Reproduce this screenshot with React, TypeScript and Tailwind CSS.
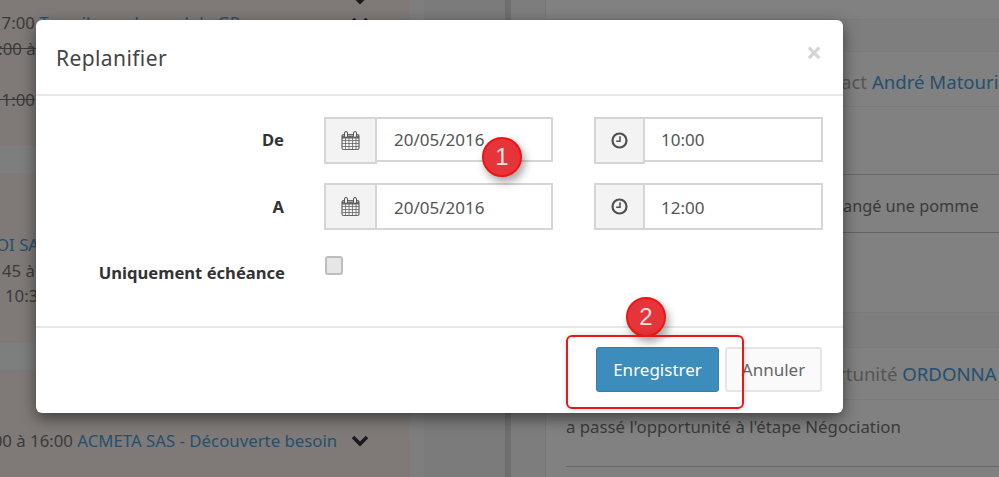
const font = { fontFamily: '"Noto Sans", sans-serif' };

function CalendarIcon() {
  return (
    <svg width="19" height="20" viewBox="0 0 19 20" fill="none" stroke="#666" strokeWidth="1">
      <rect x="1" y="3.5" width="17" height="15" rx="1.5" fill="#f3f3f3" strokeWidth="1.2" />
      <path d="M1 9.5h17M1 12.5h17M1 15.5h17M4.5 7v11.5M8 7v11.5M11.5 7v11.5M15 7v11.5" strokeWidth="0.8" />
      <path d="M1 4.5h17v3h-17z" fill="#666" stroke="none" />
      <rect x="3.5" y="0.5" width="3" height="6" rx="1.5" fill="#f3f3f3" stroke="#555" />
      <rect x="12.5" y="0.5" width="3" height="6" rx="1.5" fill="#f3f3f3" stroke="#555" />
    </svg>
  );
}

function ClockIcon() {
  return (
    <svg width="17" height="17" viewBox="0 0 17 17" fill="none" stroke="#4f4f4f" strokeWidth="2.2">
      <circle cx="8.5" cy="8.5" r="7" />
      <path d="M9 4.2v5H5.2" strokeWidth="1.5" />
    </svg>
  );
}

function Chevron({ className = '' }: { className?: string }) {
  return (
    <svg className={className} width="18" height="12" viewBox="0 0 18 12" fill="none" stroke="#1a1a1a" strokeWidth="3.5">
      <path d="M2 2l7 7 7-7" />
    </svg>
  );
}

function InputGroup({ icon, value, addonWidth, inputClass }: { icon: React.ReactNode; value: string; addonWidth: string; inputClass: string }) {
  return (
    <div className="flex items-start">
      <div className={`flex h-[47px] items-center justify-center border-2 border-[#d5d5d5] bg-[#f3f3f3] ${addonWidth}`}>{icon}</div>
      <div className={`-ml-0.5 flex items-center border-2 border-[#d5d5d5] bg-white text-[17px] text-[#555] ${inputClass}`}>{value}</div>
    </div>
  );
}

function FormRow({ label, date, time, tall }: { label: string; date: string; time: string; tall?: boolean }) {
  return (
    <div className="flex h-[47px] items-start">
      <div className={`w-[248px] text-right text-[16.6px] font-bold text-[#333] ${tall ? 'pt-[12px]' : 'pt-[11px]'}`}>{label}</div>
      <div className="ml-10">
        <InputGroup icon={<CalendarIcon />} value={date} addonWidth="w-[53px]" inputClass={tall ? 'h-[47px] w-[178px] pl-[17px] pt-[2px]' : 'h-[45px] w-[178px] pl-[17px]'} />
      </div>
      <div className="ml-[41px]">
        <InputGroup icon={<ClockIcon />} value={time} addonWidth="w-[51px]" inputClass={tall ? 'h-[47px] w-[180px] pl-4 pt-[2px]' : 'h-[45px] w-[180px] pl-4'} />
      </div>
    </div>
  );
}

function Badge({ n, className }: { n: number; className: string }) {
  return (
    <div className={`absolute flex h-[40px] w-[40px] items-center justify-center rounded-full border-2 border-[#f01414] bg-[#e5343a] text-[24px] font-medium text-[#fbe3e3] shadow-[3px_5px_8px_rgba(0,0,0,0.35)] ${className}`} style={{ fontFamily: '"Liberation Sans", sans-serif' }}>
      {n}
    </div>
  );
}

export default function App() {
  return (
    <div className="relative h-[477px] w-[999px] overflow-hidden bg-[#808080] text-[16.8px] text-[#3a3a3a]" style={font}>
      {/* page behind the modal */}
      <div className="flex h-full">
        <div className="h-full w-[410px] shrink-0 overflow-hidden whitespace-nowrap bg-[#7f7a78]">
          <div className="flex h-[10px] w-[369px] justify-end">
            <Chevron className="-mt-[7px]" />
          </div>
          <div className="flex h-[26px] w-[369px] items-center justify-between">
            <span>
              <span className="-ml-2 inline-block">17:00</span> <span className="text-[#24506e]">Travail avec le module GP</span>
            </span>
            <Chevron />
          </div>
          <div className="-ml-[21px] flex h-[26px] items-center line-through">10:00 à 11:00</div>
          <div className="h-[25px]" />
          <div className="-ml-2 flex h-[26px] items-center line-through">11:00</div>
          <div className="h-[33px]" />
          <div className="h-[27px] bg-[#7d7f7f]" />
          <div className="h-[59px]" />
          <div className="-ml-[4px] flex h-[26px] items-center text-[#24506e]">OI SAS</div>
          <div className="flex h-[26px] items-center pl-[2px]">45 à</div>
          <div className="flex h-[24px] items-center pl-[5px]">10:3</div>
          <div className="h-[35px]" />
          <div className="h-[27px] bg-[#7d7f7f]" />
          <div className="h-[58px]" />
          <div className="-ml-[31px] flex h-[26px] items-center">
            <span>10:00 à 16:00&nbsp;</span>
            <span className="text-[#24506e]">ACMETA SAS - Découverte besoin</span>
            <Chevron className="ml-[14px]" />
          </div>
        </div>
        <div className="h-full w-[14px] shrink-0 bg-[#7d7e7d]" />
        <div className="h-full w-[81px] shrink-0 bg-[#7b7b7b]" />
        <div className="h-full w-[6px] shrink-0 bg-[#6f6f6f]" />
        <div className="h-full w-[34px] shrink-0 bg-[#7d7d7d]" />
        <div className="h-full min-w-0 flex-1 overflow-hidden whitespace-nowrap border-l border-[#787878] bg-[#818181]">
          <div className="h-[20px] border-b border-[#7a7a7a]" />
          <div className="h-[32px] border-b border-[#7a7a7a] bg-[#7e7e7e]" />
          <div className="flex h-[55px] items-center border-b border-[#7a7a7a] pl-[295px] pt-[5px] text-[18.6px]">
            <span className="text-[#555]">act&nbsp;</span>
            <span className="text-[#24506e]">André Matouri</span>
          </div>
          <div className="ml-5 h-[68px] border-b border-[#6a6a6a]" />
          <div className="ml-5 flex h-[58px] items-center border-b border-[#636363] pl-[277px] pt-[5px] text-[16.3px]">angé une pomme</div>
          <div className="h-[80px] border-b border-[#7a7a7a]" />
          <div className="h-[34px] bg-[#7e7e7e]" />
          <div className="flex h-[53px] items-center border-y border-[#7a7a7a] pl-[292px] text-[18.6px]">
            <span className="text-[#555]">rtunité&nbsp;</span>
            <span className="text-[#24506e]">ORDONNA</span>
          </div>
          <div className="ml-5 flex h-[67px] items-start border-b border-[#666] pt-[15px] leading-6">a passé l'opportunité à l'étape Négociation</div>
        </div>
      </div>

      {/* modal */}
      <div className="absolute left-9 top-5 w-[807px] rounded-md bg-white shadow-[0_5px_15px_rgba(0,0,0,0.5)]">
        <div className="flex h-[76px] items-center justify-between border-b-2 border-[#e8e8e8] pl-5 pr-[21px] pt-[4px]">
          <h4 className="text-[21px] tracking-[0.4px] text-[#444]">Replanifier</h4>
          <span className="-mt-[14px] text-[28px] font-bold leading-none text-[#d4d4d4]">×</span>
        </div>
        <div className="h-[230px] pt-[21px]">
          <FormRow label="De" date="20/05/2016" time="10:00" />
          <div className="h-[19px]" />
          <FormRow label="A" date="20/05/2016" time="12:00" tall />
          <div className="mt-[26px] flex items-start">
            <div className="w-[249px] pt-[5px] text-right text-[16.6px] font-bold text-[#333]">Uniquement échéance</div>
            <div className="ml-10 h-[19px] w-[18px] rounded-[3px] border-2 border-[#bdbdbd] bg-[#e6e6e6]" />
          </div>
        </div>
        <div className="flex h-[87px] items-start justify-end gap-[6px] border-t-2 border-[#e8e8e8] pr-[21px] pt-[19px]">
          <button className="h-[45px] w-[123px] rounded-[3px] border border-[#367fa9] bg-[#3c8dbc] text-[17px] text-white">Enregistrer</button>
          <button className="h-[45px] w-[97px] rounded-[3px] border-2 border-[#e6e6e6] bg-[#fafafa] text-[17px] text-[#666]">Annuler</button>
        </div>
      </div>

      {/* annotations */}
      <Badge n={1} className="left-[482px] top-[137px]" />
      <Badge n={2} className="left-[626px] top-[297px]" />
      <div className="absolute left-[566px] top-[335px] h-[74px] w-[178px] rounded-[6px] border-2 border-[#f01414] shadow-[0_0_6px_rgba(0,0,0,0.15)]" />
    </div>
  );
}
